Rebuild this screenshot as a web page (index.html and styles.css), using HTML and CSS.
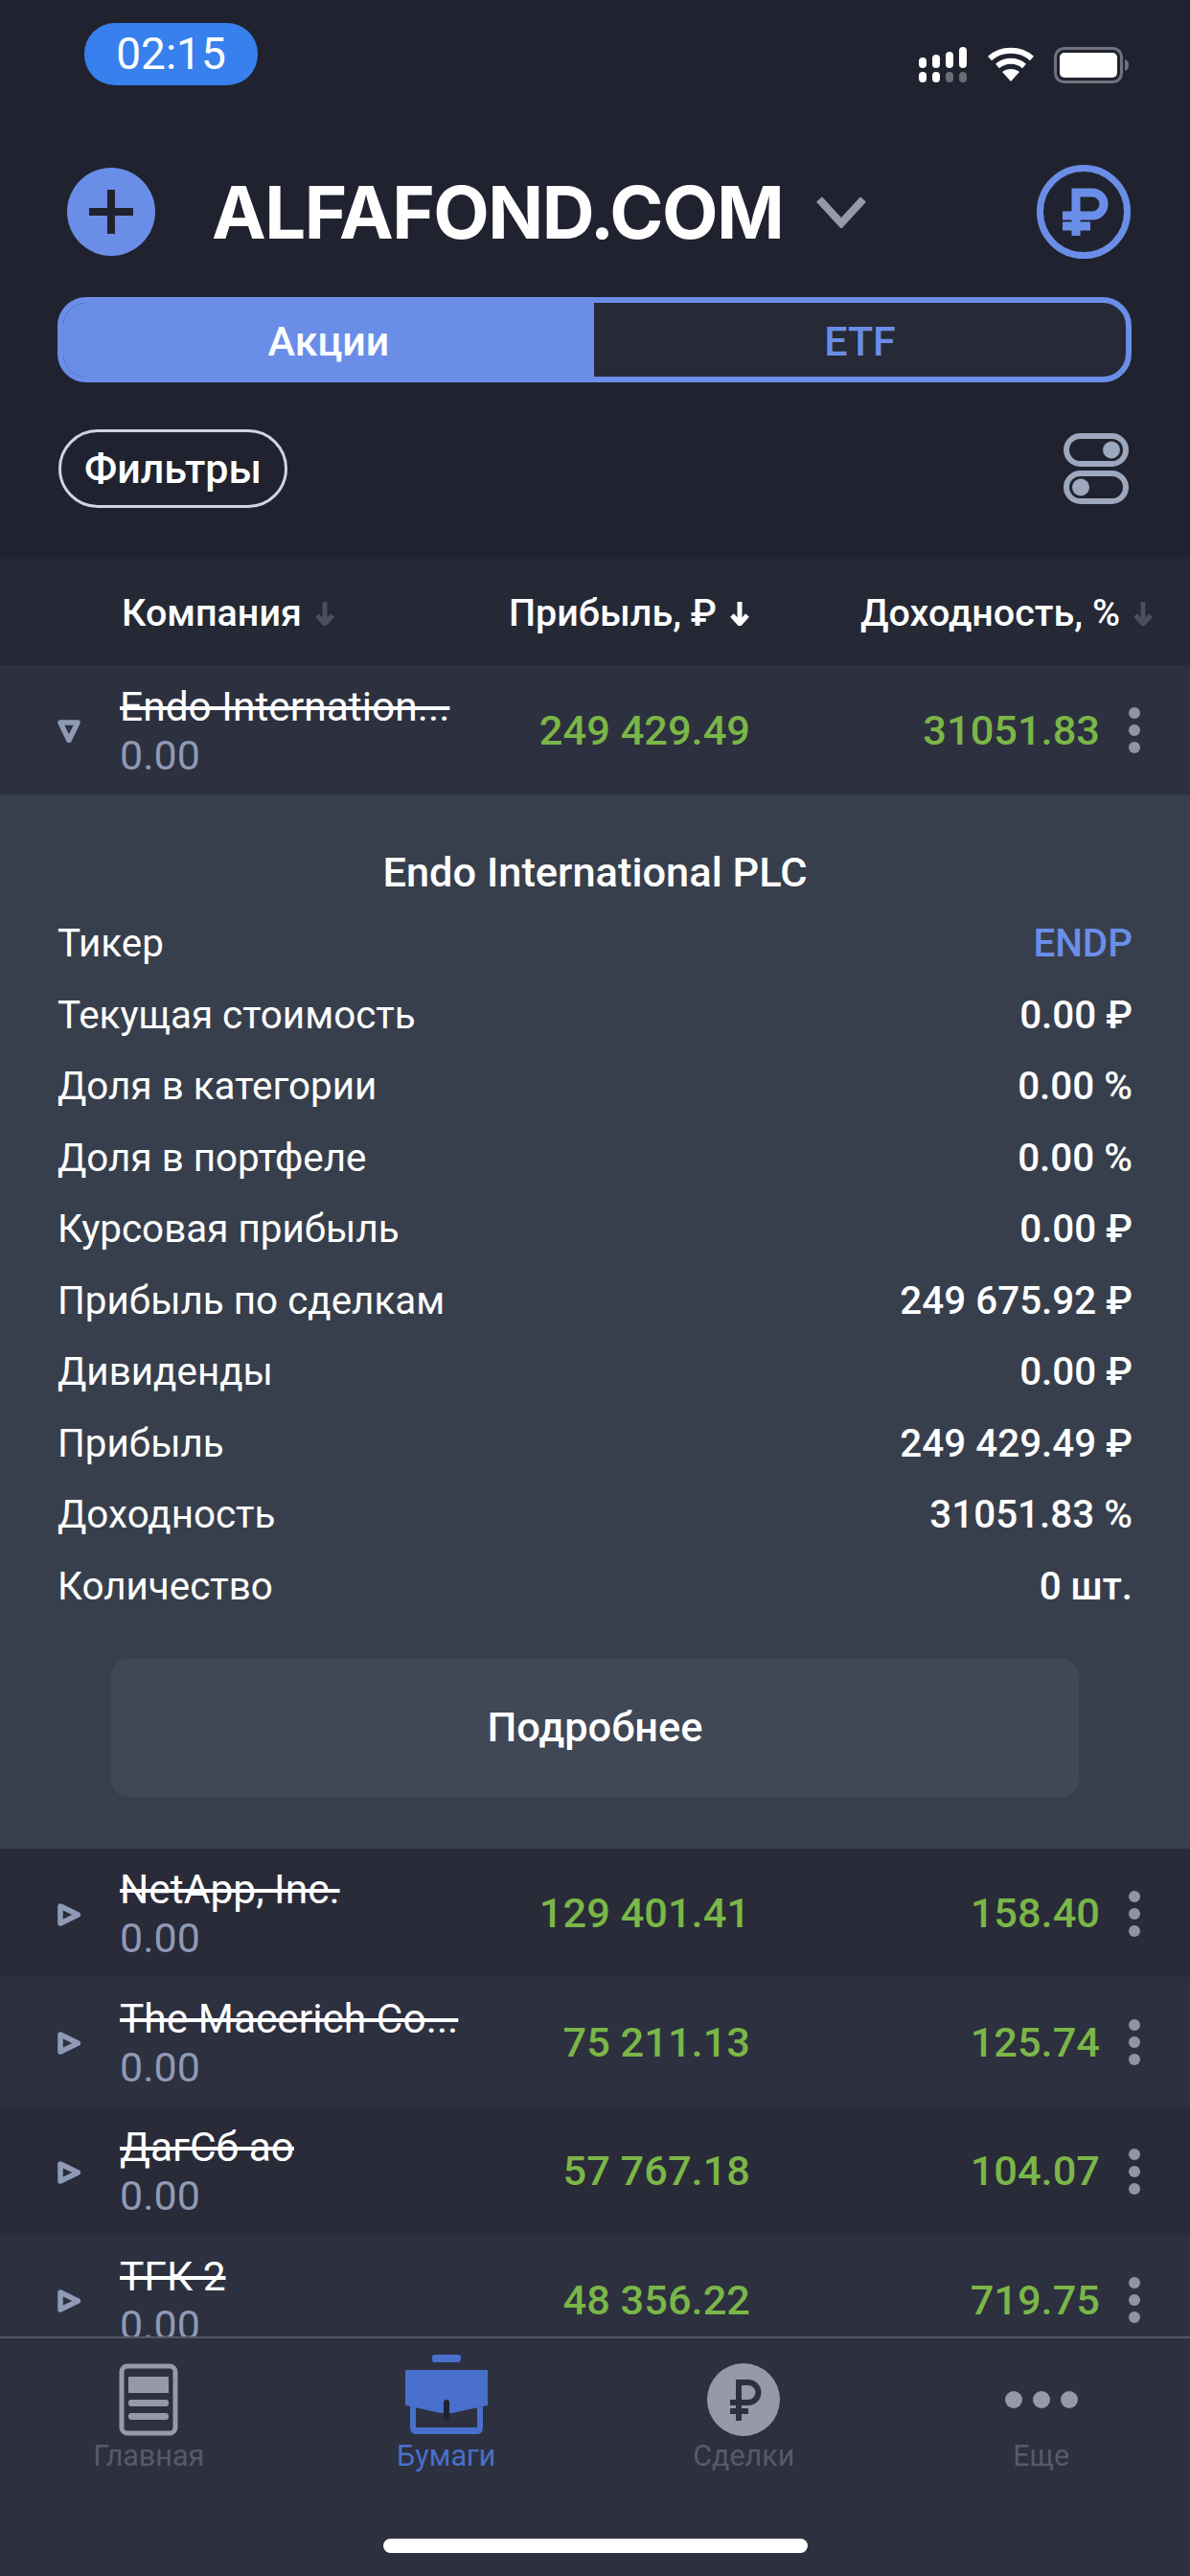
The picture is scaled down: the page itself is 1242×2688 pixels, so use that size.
FILE: index.html
```html
<!DOCTYPE html>
<html>
    <head>
        <meta charset="utf-8" />
        <title>Бумаги</title>
        <link rel="stylesheet" href="styles.css">
    </head>
    <body>
        <div class="app">
            <div class="status">
                <div class="time">02:15</div>
                <div class="status-icons">
                    <svg class="sig" width="51" height="37" viewBox="0 0 51 37">
                        <g fill="#fff">
                            <rect x="0" y="11" width="8" height="11" rx="4"/>
                            <rect x="14" y="8" width="8" height="14" rx="4"/>
                            <rect x="28" y="5" width="8" height="17" rx="4"/>
                            <rect x="42" y="0" width="8" height="22" rx="4"/>
                            <rect x="0" y="26" width="8" height="11" rx="4"/>
                            <rect x="14" y="26" width="8" height="11" rx="4"/>
                        </g>
                        <g fill="#6a6d78">
                            <rect x="28" y="26" width="8" height="11" rx="4"/>
                            <rect x="42" y="26" width="8" height="11" rx="4"/>
                        </g>
                    </svg>
                    <svg width="50" height="36" viewBox="0 0 50 36">
                        <path d="M3 12 C15 1 35 1 47 12" fill="none" stroke="#fff" stroke-width="6"/>
                        <path d="M11 20 C19 13 31 13 39 20" fill="none" stroke="#fff" stroke-width="6"/>
                        <path d="M25 36 L16 26 C21 22 29 22 34 26 Z" fill="#fff"/>
                    </svg>
                    <svg width="78" height="38" viewBox="0 0 78 38">
                        <rect x="1.5" y="1.5" width="69" height="35" rx="9" fill="none" stroke="#70737d" stroke-width="3"/>
                        <rect x="6" y="6" width="60" height="26" rx="5" fill="#fff"/>
                        <path d="M74 13 C77 14 78 16 78 19 C78 22 77 24 74 25 Z" fill="#70737d"/>
                    </svg>
                </div>
            </div>

            <div class="brand">
                <svg class="brand-add" width="92" height="92" viewBox="0 0 92 92">
                    <circle cx="46" cy="46" r="46" fill="#6a8ee8"/>
                    <path d="M46 23 V69 M23 46 H69" stroke="#20232f" stroke-width="8"/>
                </svg>
                <div class="brand-name">ALFAFOND.COM</div>
                <svg class="brand-arrow" width="54" height="34" viewBox="0 0 54 34">
                    <path d="M4 4 L27 29 L50 4" fill="none" stroke="#9599a8" stroke-width="8"/>
                </svg>
                <svg class="brand-cur" width="98" height="98" viewBox="0 0 98 98">
                    <circle cx="49" cy="49" r="45.5" fill="none" stroke="#6a8ee8" stroke-width="7"/>
                    <path d="M41 74 V29 H58 A12 12 0 0 1 58 53 H27 M27 64 H56" fill="none" stroke="#6a8ee8" stroke-width="9"/>
                </svg>
            </div>

            <div class="segment">
                <div class="seg seg-on">Акции</div>
                <div class="seg">ETF</div>
            </div>

            <div class="tools">
                <div class="filter">Фильтры</div>
                <svg width="68" height="74" viewBox="0 0 68 74">
                    <rect x="3" y="3" width="62" height="29" rx="14.5" fill="none" stroke="#9da7bd" stroke-width="6"/>
                    <circle cx="50" cy="17.5" r="9" fill="#9da7bd"/>
                    <rect x="3" y="42" width="62" height="29" rx="14.5" fill="none" stroke="#9da7bd" stroke-width="6"/>
                    <circle cx="18" cy="56.5" r="9" fill="#9da7bd"/>
                </svg>
            </div>

            <div class="thead">
                <div class="th th-name">Компания
                    <svg class="sort" width="22" height="26" viewBox="0 0 22 26"><path d="M11 1 V23 M3 15 L11 24 L19 15" fill="none" stroke="#4a4f5e" stroke-width="5"/></svg>
                </div>
                <div class="th th-profit">Прибыль, ₽
                    <svg class="sort" width="22" height="26" viewBox="0 0 22 26"><path d="M11 1 V23 M3 15 L11 24 L19 15" fill="none" stroke="#fff" stroke-width="5"/></svg>
                </div>
                <div class="th th-yield">Доходность, %
                    <svg class="sort" width="22" height="26" viewBox="0 0 22 26"><path d="M11 1 V23 M3 15 L11 24 L19 15" fill="none" stroke="#4a4f5e" stroke-width="5"/></svg>
                </div>
            </div>

            <div class="list">
                <div class="row row-b">
                    <svg class="tri" width="24" height="24" viewBox="0 0 24 24"><path d="M3 3 H21 L12 21.5 Z" fill="none" stroke="#8f9ab5" stroke-width="5.5" stroke-linejoin="round"/></svg>
                    <div class="name">
                        <div class="name-main">Endo Internation...</div>
                        <div class="name-sub">0.00</div>
                    </div>
                    <div class="num">249 429.49</div>
                    <div class="num">31051.83</div>
                    <div class="dots"><i></i><i></i><i></i></div>
                </div>

                <div class="detail">
                    <div class="detail-title">Endo International PLC</div>
                    <div class="kv"><span>Тикер</span><span class="kv-link">ENDP</span></div>
                    <div class="kv"><span>Текущая стоимость</span><span class="kv-val">0.00 ₽</span></div>
                    <div class="kv"><span>Доля в категории</span><span class="kv-val">0.00 %</span></div>
                    <div class="kv"><span>Доля в портфеле</span><span class="kv-val">0.00 %</span></div>
                    <div class="kv"><span>Курсовая прибыль</span><span class="kv-val">0.00 ₽</span></div>
                    <div class="kv"><span>Прибыль по сделкам</span><span class="kv-val">249 675.92 ₽</span></div>
                    <div class="kv"><span>Дивиденды</span><span class="kv-val">0.00 ₽</span></div>
                    <div class="kv"><span>Прибыль</span><span class="kv-val">249 429.49 ₽</span></div>
                    <div class="kv"><span>Доходность</span><span class="kv-val">31051.83 %</span></div>
                    <div class="kv"><span>Количество</span><span class="kv-val">0 шт.</span></div>
                    <div class="more">Подробнее</div>
                </div>

                <div class="row row-a">
                    <svg class="tri" width="24" height="24" viewBox="0 0 24 24"><path d="M3 3 V21 L21.5 12 Z" fill="none" stroke="#8f9ab5" stroke-width="5.5" stroke-linejoin="round"/></svg>
                    <div class="name">
                        <div class="name-main">NetApp, Inc.</div>
                        <div class="name-sub">0.00</div>
                    </div>
                    <div class="num">129 401.41</div>
                    <div class="num">158.40</div>
                    <div class="dots"><i></i><i></i><i></i></div>
                </div>
                <div class="row row-b">
                    <svg class="tri" width="24" height="24" viewBox="0 0 24 24"><path d="M3 3 V21 L21.5 12 Z" fill="none" stroke="#8f9ab5" stroke-width="5.5" stroke-linejoin="round"/></svg>
                    <div class="name">
                        <div class="name-main">The Macerich Co...</div>
                        <div class="name-sub">0.00</div>
                    </div>
                    <div class="num">75 211.13</div>
                    <div class="num">125.74</div>
                    <div class="dots"><i></i><i></i><i></i></div>
                </div>
                <div class="row row-a">
                    <svg class="tri" width="24" height="24" viewBox="0 0 24 24"><path d="M3 3 V21 L21.5 12 Z" fill="none" stroke="#8f9ab5" stroke-width="5.5" stroke-linejoin="round"/></svg>
                    <div class="name">
                        <div class="name-main">ДагСб ао</div>
                        <div class="name-sub">0.00</div>
                    </div>
                    <div class="num">57 767.18</div>
                    <div class="num">104.07</div>
                    <div class="dots"><i></i><i></i><i></i></div>
                </div>
                <div class="row row-b">
                    <svg class="tri" width="24" height="24" viewBox="0 0 24 24"><path d="M3 3 V21 L21.5 12 Z" fill="none" stroke="#8f9ab5" stroke-width="5.5" stroke-linejoin="round"/></svg>
                    <div class="name">
                        <div class="name-main">ТГК-2</div>
                        <div class="name-sub">0.00</div>
                    </div>
                    <div class="num">48 356.22</div>
                    <div class="num">719.75</div>
                    <div class="dots"><i></i><i></i><i></i></div>
                </div>
            </div>

            <div class="tabbar">
                <div class="tabs">
                    <div class="tab">
                        <svg width="62" height="76" viewBox="0 0 62 76">
                            <rect x="3" y="3" width="56" height="70" rx="6" fill="none" stroke="#9599a8" stroke-width="5"/>
                            <rect x="10" y="14" width="42" height="17" fill="#9599a8"/>
                            <rect x="10" y="38" width="42" height="7" rx="3" fill="#9599a8"/>
                            <rect x="10" y="52" width="42" height="7" rx="3" fill="#9599a8"/>
                        </svg>
                        <div class="tab-label">Главная</div>
                    </div>
                    <div class="tab tab-on">
                        <svg width="88" height="85" viewBox="0 0 88 85" class="tab-case">
                            <rect x="29" y="0" width="30" height="8" rx="3" fill="#4870cc"/>
                            <path d="M2 17 H86 V52 L50 60 H38 L2 52 Z" fill="#4870cc" stroke="#4870cc" stroke-width="2" stroke-linejoin="round"/>
                            <path d="M6 54 V76 Q6 83 12 83 H76 Q82 83 82 76 V54 L76 55 V76 H12 V55 Z" fill="#4870cc"/>
                            <rect x="41" y="47" width="6" height="21" rx="3" fill="#20232f"/>
                        </svg>
                        <div class="tab-label">Бумаги</div>
                    </div>
                    <div class="tab">
                        <svg width="76" height="76" viewBox="0 0 76 76">
                            <circle cx="38" cy="38" r="38" fill="#9599a8"/>
                            <path d="M33 60 V20 H43 A10.5 10.5 0 0 1 43 41 H24 M24 50 H43" fill="none" stroke="#2d303e" stroke-width="6"/>
                        </svg>
                        <div class="tab-label">Сделки</div>
                    </div>
                    <div class="tab">
                        <svg width="76" height="76" viewBox="0 0 76 76">
                            <circle cx="9" cy="38" r="9" fill="#9599a8"/>
                            <circle cx="38" cy="38" r="9" fill="#9599a8"/>
                            <circle cx="67" cy="38" r="9" fill="#9599a8"/>
                        </svg>
                        <div class="tab-label">Еще</div>
                    </div>
                </div>
                <div class="home"></div>
            </div>
        </div>
    </body>
</html>
```

FILE: styles.css
```css
html, body {
    margin: 0px;
    padding: 0px;
}
body {
    font-family: 'Roboto', 'Liberation Sans', sans-serif;
    color: #fff;
    background-color: #20232f;
}
.app {
    width: 1242px;
    height: 2688px;
    display: flex;
    flex-direction: column;
    overflow: hidden;
}

/* status bar */
.status {
    height: 172px;
    flex: none;
    display: flex;
    justify-content: space-between;
    align-items: flex-start;
    box-sizing: border-box;
    padding: 24px 64px 0 88px;
}
.time {
    width: 181px;
    height: 65px;
    line-height: 65px;
    border-radius: 32px;
    background-color: #3780ee;
    text-align: center;
    font-size: 46px;
}
.status-icons {
    display: flex;
    align-items: flex-start;
    gap: 20px;
    margin-top: 25px;
}

/* brand line */
.brand {
    flex: none;
    height: 98px;
    display: flex;
    align-items: center;
    padding-left: 70px;
    padding-right: 62px;
}
.brand-name {
    margin-left: 59px;
    font-family: 'Inter', sans-serif;
    font-weight: 700;
    font-size: 76px;
    letter-spacing: -1.5px;
}
.brand-arrow {
    margin-left: 34px;
}
.brand-cur {
    margin-left: auto;
}

/* segment */
.segment {
    flex: none;
    display: flex;
    margin: 40px 61px 0 60px;
    height: 89px;
    box-sizing: border-box;
    border-radius: 30px;
    border: 6px solid #6a8ee8;
    background-color: #262a36;
    overflow: hidden;
}
.seg {
    flex: 1;
    display: flex;
    align-items: center;
    justify-content: center;
    padding-top: 2px;
    font-size: 43px;
    font-weight: 500;
    color: #6a8ee8;
}
.seg-on {
    flex: none;
    width: 554px;
    background-color: #6a8ee8;
    color: #fff;
}

/* filter line */
.tools {
    flex: none;
    height: 184px;
    box-sizing: border-box;
    display: flex;
    justify-content: space-between;
    align-items: flex-start;
    padding: 49px 64px 0 61px;
}
.filter {
    width: 239px;
    height: 82px;
    box-sizing: border-box;
    border: 3px solid #d0d3e0;
    border-radius: 41px;
    display: flex;
    align-items: center;
    justify-content: center;
    font-size: 43px;
    font-weight: 500;
}
.tools svg {
    margin-top: 4px;
}

/* table head */
.thead {
    flex: none;
    height: 111px;
    box-sizing: border-box;
    padding-top: 2px;
    background-color: #252935;
    display: grid;
    grid-template-columns: 125px 358px 300px 385px 74px;
    align-items: center;
}
.th {
    font-size: 39.5px;
    font-weight: 500;
    white-space: nowrap;
    display: flex;
    align-items: center;
    gap: 13px;
}
.th-name {
    grid-column: 2;
    padding-left: 2px;
}
.th-profit {
    justify-content: flex-end;
}
.th-yield {
    grid-column: 4 / 6;
    justify-content: flex-end;
    padding-right: 38px;
}
.sort {
    flex: none;
}

/* rows */
.list {
    flex: 1;
    min-height: 0;
    overflow: hidden;
}
.row {
    height: 134.5px;
    padding-left: 60px;
    display: grid;
    grid-template-columns: 65px 358px 300px 365px 94px;
    align-items: center;
}
.row-a {
    background-color: #292b38;
}
.row-b {
    background-color: #2d303e;
}
.tri {
    display: block;
    margin-top: 4px;
}
.name {
    padding-top: 3px;
}
.name-main {
    font-size: 42.5px;
    line-height: 50px;
    text-decoration: line-through;
    white-space: nowrap;
}
.name-sub {
    font-size: 43px;
    line-height: 50px;
    color: #8f9ab5;
}
.num {
    font-size: 43.4px;
    font-weight: 500;
    color: #7ab648;
    text-align: right;
    padding-top: 2px;
}
.dots {
    display: flex;
    flex-direction: column;
    align-items: center;
    gap: 6px;
    padding-right: 22px;
    padding-top: 2px;
}
.dots i {
    display: block;
    width: 12px;
    height: 12px;
    border-radius: 50%;
    background-color: #9094a6;
}

/* expanded detail */
.detail {
    height: 1100px;
    box-sizing: border-box;
    background-color: #383f4c;
    padding: 45px 60px 0;
}
.detail-title {
    height: 74px;
    line-height: 74px;
    text-align: center;
    font-size: 43.4px;
    font-weight: 500;
}
.kv {
    height: 74.5px;
    display: flex;
    align-items: center;
    justify-content: space-between;
    font-size: 40.4px;
}
.kv-val {
    font-weight: 500;
}
.kv-link {
    color: #6a8ee8;
    font-weight: 500;
}
.more {
    margin: 38px 56px 0;
    height: 144px;
    border-radius: 18px;
    background-color: #404755;
    display: flex;
    align-items: center;
    justify-content: center;
    font-size: 43.4px;
    font-weight: 500;
}

/* tab bar */
.tabbar {
    flex: none;
    height: 250px;
    box-sizing: border-box;
    background-color: #2d303e;
    border-top: 2px solid #555866;
    position: relative;
}
.tabs {
    display: grid;
    grid-template-columns: repeat(4, 1fr);
    padding-top: 26px;
}
.tab {
    display: flex;
    flex-direction: column;
    align-items: center;
    color: #575a69;
    font-size: 30.5px;
}
.tab svg {
    height: 76px;
}
.tab .tab-case {
    height: 85px;
    margin-top: -9px;
}
.tab-label {
    margin-top: 3px;
}
.tab-on {
    color: #4870cc;
}
.home {
    position: absolute;
    left: 400px;
    top: 209px;
    width: 443px;
    height: 15px;
    border-radius: 8px;
    background-color: #fff;
}
```
